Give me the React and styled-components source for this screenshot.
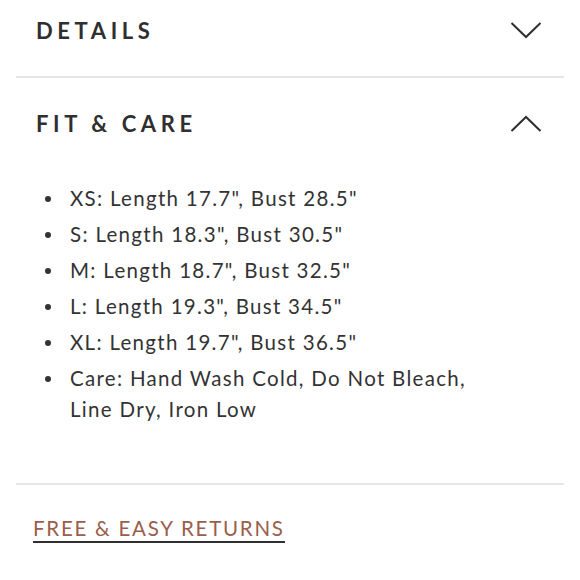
import React from "react";
import styled, { createGlobalStyle } from "styled-components";

const Global = createGlobalStyle`
  html, body { margin: 0; padding: 0; background: #fff; }
  body { font-family: Lato, "Open Sans", sans-serif; color: #2f2f2f; }
`;

const Page = styled.div`
  width: 580px;
  height: 580px;
  padding: 0 16px;
  box-sizing: border-box;
  overflow: hidden;
`;

const Section = styled.section`
  border-bottom: 2px solid #e6e6e6;
  padding-bottom: ${(p) => (p.$open ? "53px" : "16px")};
`;

const Header = styled.div`
  display: flex;
  align-items: center;
  justify-content: space-between;
  height: ${(p) => p.$h}px;
  padding: 0 22px 0 20px;
`;

const Title = styled.h2`
  margin: 0;
  font-size: 22px;
  font-weight: 700;
  letter-spacing: 4.6px;
  color: #2f2f2f;
`;

const Chevron = styled.svg`
  width: 32px;
  height: 18px;
  display: block;
`;

const List = styled.ul`
  margin: 14px 0 0;
  padding: 0 0 0 54px;
  list-style: none;
`;

const Item = styled.li`
  position: relative;
  font-size: 20.5px;
  line-height: 31px;
  letter-spacing: 1.3px;
  color: #333;
  margin-bottom: 5px;
  max-width: 420px;
  &::before {
    content: "";
    position: absolute;
    left: -25px;
    top: 13px;
    width: 6px;
    height: 6px;
    border-radius: 50%;
    background: #333;
  }
`;

const Footer = styled.div`
  padding: 31px 0 0 17px;
`;

const ReturnsLink = styled.a`
  font-size: 20.5px;
  letter-spacing: 1.75px;
  color: #9a5e4c;
  text-decoration: none;
  border-bottom: 2px solid #2f2f2f;
  padding-bottom: 1px;
`;

const Down = () => (
  <Chevron viewBox="0 0 32 18">
    <polyline points="1.5,2 16,16 30.5,2" fill="none" stroke="#2f2f2f" strokeWidth="2" />
  </Chevron>
);
const Up = () => (
  <Chevron viewBox="0 0 32 18">
    <polyline points="1.5,16 16,2 30.5,16" fill="none" stroke="#2f2f2f" strokeWidth="2" />
  </Chevron>
);

const items = [
  'XS: Length 17.7", Bust 28.5"',
  'S: Length 18.3", Bust 30.5"',
  'M: Length 18.7", Bust 32.5"',
  'L: Length 19.3", Bust 34.5"',
  'XL: Length 19.7", Bust 36.5"',
  "Care: Hand Wash Cold, Do Not Bleach, Line Dry, Iron Low",
];

export default function App() {
  return (
    <Page>
      <Global />
      <Section>
        <Header $h={60}>
          <Title>DETAILS</Title>
          <Down />
        </Header>
      </Section>
      <Section $open>
        <Header $h={91}>
          <Title>FIT &amp; CARE</Title>
          <Up />
        </Header>
        <List>
          {items.map((t) => (
            <Item key={t}>{t}</Item>
          ))}
        </List>
      </Section>
      <Footer>
        <ReturnsLink href="#">FREE &amp; EASY RETURNS</ReturnsLink>
      </Footer>
    </Page>
  );
}
